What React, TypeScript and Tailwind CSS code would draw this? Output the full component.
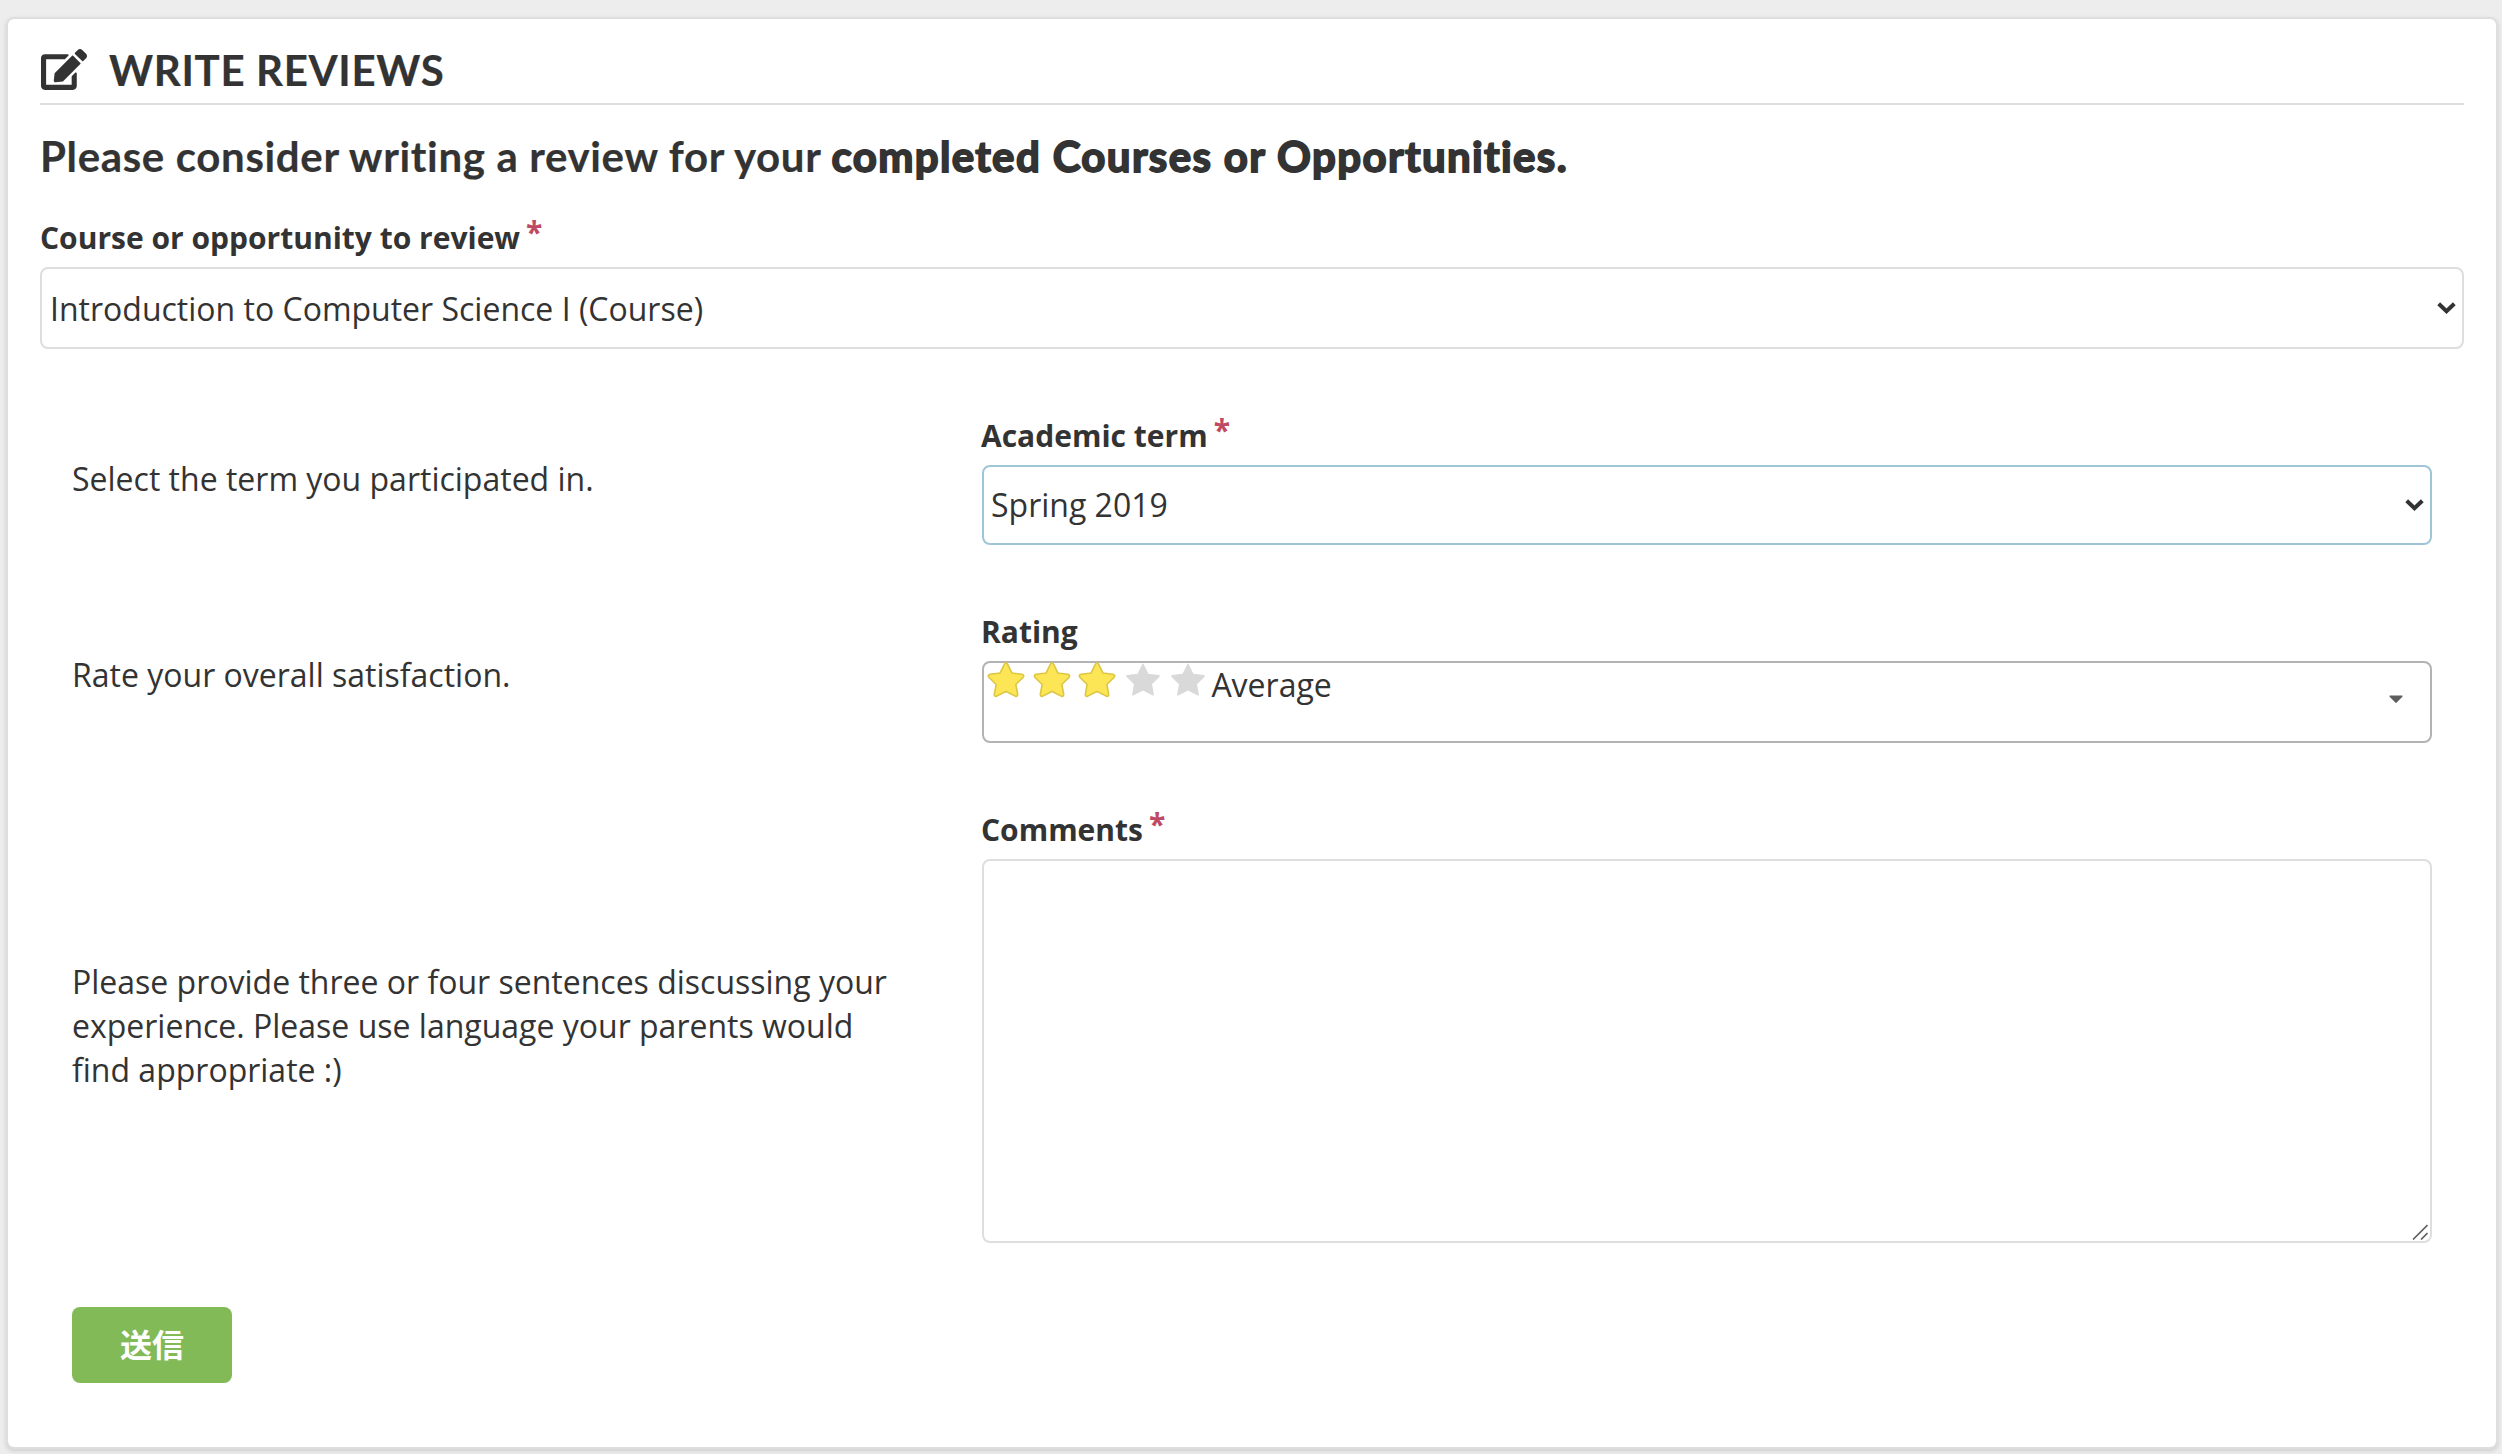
import { FaEdit } from "react-icons/fa";

const body = "font-['Open_Sans','Noto_Sans_CJK_JP',sans-serif]";

function Label({ text, required }: { text: string; required?: boolean }) {
  return (
    <div className="flex h-[50px] items-start text-[30px] leading-[42px] font-bold whitespace-nowrap">
      <span>{text}</span>
      {required && <span className="-mt-[6px] ml-[6px] text-[#be4b63]">*</span>}
    </div>
  );
}

function Chevron() {
  return (
    <svg className="h-[13px] w-[19px]" viewBox="0 0 19 13" fill="none">
      <path d="M1.7 1.8 L9.5 9.2 L17.3 1.8" stroke="#333" strokeWidth="4" />
    </svg>
  );
}

function Star({ filled }: { filled: boolean }) {
  return (
    <svg
      className={filled ? "h-[38px] w-[38px] overflow-visible fill-[#fde655] stroke-[#dcc644] [paint-order:stroke]" : "h-[38px] w-[38px] fill-[#d9d9d9]"}
      viewBox="0 0 38 38"
      strokeWidth={filled ? 3.2 : 0}
      strokeLinejoin="round"
    >
      <path d="M18.2 3.4 Q19 1.6 19.8 3.4 L24.4 12.8 L34.9 14.1 Q36.6 14.6 35.4 15.9 L28 23.2 L29.9 33.4 Q29.9 34.9 28.6 34.4 L19 29.6 L9.4 34.4 Q8.1 34.9 8.1 33.4 L10 23.2 L2.6 15.9 Q1.4 14.6 3.1 14.1 L13.6 12.8 Z" />
    </svg>
  );
}

function Select({ value, className, textClass }: { value: string; className: string; textClass: string }) {
  return (
    <div className={`flex items-center justify-between rounded-lg border-2 bg-white ${className}`}>
      <span className={textClass}>{value}</span>
      <Chevron />
    </div>
  );
}

export default function App() {
  return (
    <div className={`h-[1454px] w-[2502px] overflow-hidden bg-[#ededed] pt-[17px] pl-[6px] text-[32px] leading-[44px] text-[#333] ${body}`}>
      <main className="flex h-[1432px] w-[2492px] flex-col rounded-lg border-2 border-[#dedede] bg-white px-8 shadow-[0_2px_4px_0_rgba(34,36,38,0.15)]">
        <header className="flex h-[86px] items-center border-b-2 border-[#dedede] pt-[17px] font-['Lato',sans-serif] text-[42px] font-bold">
          <FaEdit className="ml-px h-[41px] w-[46px]" />
          <h1 className="ml-[22px] tracking-[0.65px] [-webkit-text-stroke:0.2px_#333]">WRITE REVIEWS</h1>
        </header>
        <h2 className="mt-[26px] h-[54px] font-['Lato',sans-serif] text-[42px] leading-[51px] font-bold whitespace-nowrap">
          <span className="tracking-[0.65px] [-webkit-text-stroke:0.2px_#333]">Please consider writing a review for your </span>
          <span className="tracking-[1.36px] [-webkit-text-stroke:1.8px_#333]">completed Courses or Opportunities.</span>
        </h2>
        <section className="mt-[32px]">
          <Label text="Course or opportunity to review" required />
          <Select value="Introduction to Computer Science I (Course)" className="h-[82px] border-[#dedede] pr-[6px] pl-2" textClass="pt-[2px]" />
        </section>
        <div className="mt-[66px] grid grid-cols-[910px_1450px] px-8">
          <p className="pt-[42px]">Select the term you participated in.</p>
          <div className="h-[196px]">
            <div className="-ml-px">
              <Label text="Academic term" required />
            </div>
            <Select value="Spring 2019" className="h-[80px] border-[#9fc6d8] pr-[6px] pl-[7px]" textClass="" />
          </div>
          <p className="pt-[42px]">Rate your overall satisfaction.</p>
          <div className="h-[198px]">
            <div className="-ml-px">
              <Label text="Rating" />
            </div>
            <div className="flex h-[82px] justify-between rounded-lg border-2 border-[#b3b3b3] pr-[27px]">
              <div className="flex">
                <div className="-mt-[2px] flex gap-[7.6px] pl-[3px]">
                  {[1, 2, 3, 4, 5].map((n) => (
                    <Star key={n} filled={n <= 3} />
                  ))}
                </div>
                <span className="ml-[4px]">Average</span>
              </div>
              <svg className="mt-[32px] h-[9px] w-[14px]" viewBox="0 0 14 9">
                <path d="M0.6 0.6 H13.4 V1.8 L7.7 7.6 Q7 8.2 6.3 7.6 L0.6 1.8 Z" fill="#5e5e5e" />
              </svg>
            </div>
          </div>
          <p className="flex items-center">Please provide three or four sentences discussing your<br />experience. Please use language your parents would<br />find appropriate :)</p>
          <div>
            <div className="-ml-px">
              <Label text="Comments" required />
            </div>
            <div className="flex h-[384px] items-end justify-end rounded-lg border-2 border-[#dedede] pr-[2px] pb-px">
              <svg className="h-4 w-4" viewBox="0 0 16 16" stroke="#626262" strokeWidth="1.7" fill="none">
                <path d="M1 15.5 L15.5 1 M9 15.5 L15.5 9" />
              </svg>
            </div>
          </div>
        </div>
        <button className="mt-[64px] ml-8 h-[76px] w-[160px] rounded-lg bg-[#83ba58] text-[32px] font-bold text-white">送信</button>
      </main>
    </div>
  );
}
